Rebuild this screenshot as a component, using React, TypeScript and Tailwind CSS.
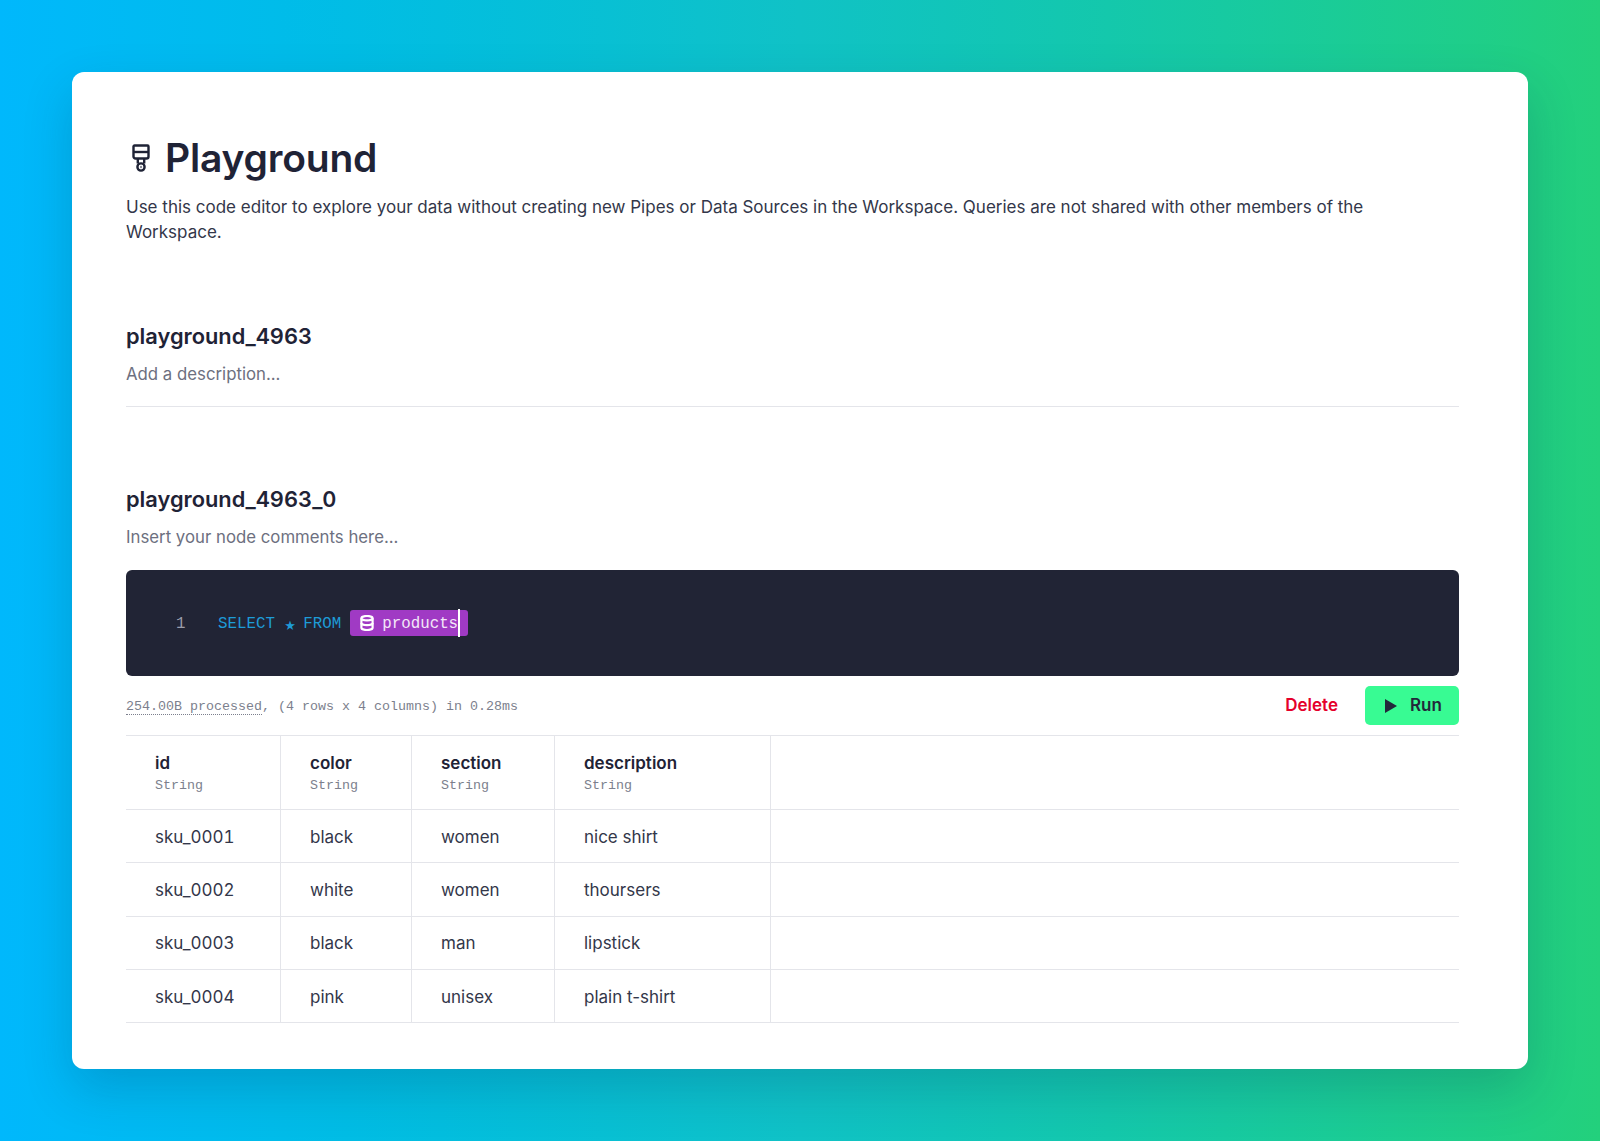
import React from 'react'

const columns = [
  { name: 'id', type: 'String' },
  { name: 'color', type: 'String' },
  { name: 'section', type: 'String' },
  { name: 'description', type: 'String' },
]

const rows = [
  ['sku_0001', 'black', 'women', 'nice shirt'],
  ['sku_0002', 'white', 'women', 'thoursers'],
  ['sku_0003', 'black', 'man', 'lipstick'],
  ['sku_0004', 'pink', 'unisex', 'plain t-shirt'],
]

const gridCols = 'grid grid-cols-[155px_131px_143px_216px_1fr]'

function BrushIcon() {
  return (
    <svg width="18" height="28" viewBox="0 0 18 28" fill="none" stroke="#1f2336" strokeWidth="2.4">
      <path d="M2.5 1.5h13a1 1 0 0 1 1 1v10a2 2 0 0 1-2 2h-11a2 2 0 0 1-2-2v-10a1 1 0 0 1 1-1z" />
      <path d="M1.5 8h15" />
      <path d="M5.8 15v4.5M12.2 15v4.5" />
      <circle cx="9" cy="23" r="3.6" />
      <circle cx="9" cy="23" r="1.2" fill="#8b8d99" stroke="none" />
    </svg>
  )
}

function DatabaseIcon() {
  return (
    <svg width="14" height="16" viewBox="0 0 14 16" fill="none" stroke="#ffffff" strokeWidth="2.2">
      <ellipse cx="7" cy="3.2" rx="5.6" ry="2.2" />
      <path d="M1.4 3.2v9.6c0 1.2 2.5 2.2 5.6 2.2s5.6-1 5.6-2.2V3.2" />
      <path d="M1.4 8c0 1.2 2.5 2.2 5.6 2.2s5.6-1 5.6-2.2" />
    </svg>
  )
}

export default function App() {
  return (
    <div className="h-[1141px] w-[1600px] overflow-hidden bg-gradient-to-r from-[#00b8fc] via-[#10c2c6] to-[#23d07c] pt-[72px] pl-[72px] font-['Inter',sans-serif] text-[#1f2336]">
      <div className="h-[997px] w-[1456px] rounded-[12px] bg-white pt-[60px] pr-[69px] pl-[54px] shadow-[0_20px_50px_rgba(0,40,80,0.2)]">
        <div className="flex h-[52px] items-center gap-[15px] pl-[6px]">
          <BrushIcon />
          <h1 className="text-[39px] leading-[52px] font-semibold tracking-[-0.2px]">Playground</h1>
        </div>
        <p className="mt-[11px] text-[17px] leading-[25px] text-[#33374a]">
          Use this code editor to explore your data without creating new Pipes or Data Sources in the Workspace. Queries are not shared with other members of the Workspace.
        </p>

        <h2 className="mt-[76px] text-[21.8px] leading-[30px] font-semibold tabular-nums">playground_4963</h2>
        <p className="mt-[11px] text-[16.8px] leading-[24px] text-[#6d7080]">Add a description...</p>
        <div className="mt-[20px] h-px w-full bg-[#e4e5ea]" />

        <h2 className="mt-[77px] text-[21.8px] leading-[30px] font-semibold tabular-nums">playground_4963_0</h2>
        <p className="mt-[11px] text-[16.8px] leading-[24px] text-[#6d7080]">Insert your node comments here...</p>

        <div className="mt-[21px] flex h-[106px] items-center rounded-[6px] bg-[#212435] pl-[50px] font-['Liberation_Mono',monospace] text-[15.8px]">
          <span className="w-[42px] pt-[4px] text-[#9a9cab]">1</span>
          <span className="flex items-center pt-[4px] whitespace-pre text-[#1e9bd7]">
            SELECT <span className="w-[9.5px] text-center font-['DejaVu_Sans',sans-serif] text-[13px] leading-none">★</span> FROM
          </span>
          <span className="relative ml-[9px] flex h-[26px] w-[118px] items-center gap-[8px] rounded-[3px] bg-[#a03ac4] pl-[10px] text-[#f3e6f8]">
            <DatabaseIcon />
            <span className="pt-[4px]">products</span>
            <span className="absolute top-[-1px] left-[108px] h-[28px] w-[2px] bg-white" />
          </span>
        </div>

        <div className="mt-[10px] flex h-[39px] items-center justify-between">
          <div className="pt-[2px] font-['Liberation_Mono',monospace] text-[13.33px] text-[#7c7f8d]">
            <span className="border-b border-dotted border-[#7c7f8d]">254.00B processed</span>, (4 rows x 4 columns) in 0.28ms
          </div>
          <div className="flex items-center gap-[27px]">
            <span className="text-[17px] font-semibold text-[#e5002b]">Delete</span>
            <button className="flex h-[39px] w-[94px] items-center gap-[13px] rounded-[5px] bg-[#38fb93] pl-[20px] text-[17px] font-semibold text-[#23273b]">
              <svg width="12" height="14" viewBox="0 0 12 14" fill="#23273b">
                <path d="M0 0l12 7-12 7z" />
              </svg>
              Run
            </button>
          </div>
        </div>

        <div className="mt-[10px] border-t border-[#e4e5ea]">
          <div className={`${gridCols} h-[74px] border-b border-[#e4e5ea]`}>
            {columns.map((col) => (
              <div key={col.name} className="border-r border-[#e4e5ea] pt-[15px] pl-[29px]">
                <div className="text-[17px] leading-[24px] font-semibold">{col.name}</div>
                <div className="mt-px font-['Liberation_Mono',monospace] text-[13.33px] leading-[20px] text-[#7c7f8d]">{col.type}</div>
              </div>
            ))}
          </div>
          {rows.map((row) => (
            <div key={row[0]} className={`${gridCols} h-[53.3px] border-b border-[#e4e5ea]`}>
              {row.map((cell, i) => (
                <div key={cell} className="flex items-center border-r border-[#e4e5ea] pt-[3px] pl-[29px] text-[17px] text-[#33374a]">
                  {i === 0 ? <span className="tabular-nums">{cell}</span> : cell}
                </div>
              ))}
            </div>
          ))}
        </div>
      </div>
    </div>
  )
}
